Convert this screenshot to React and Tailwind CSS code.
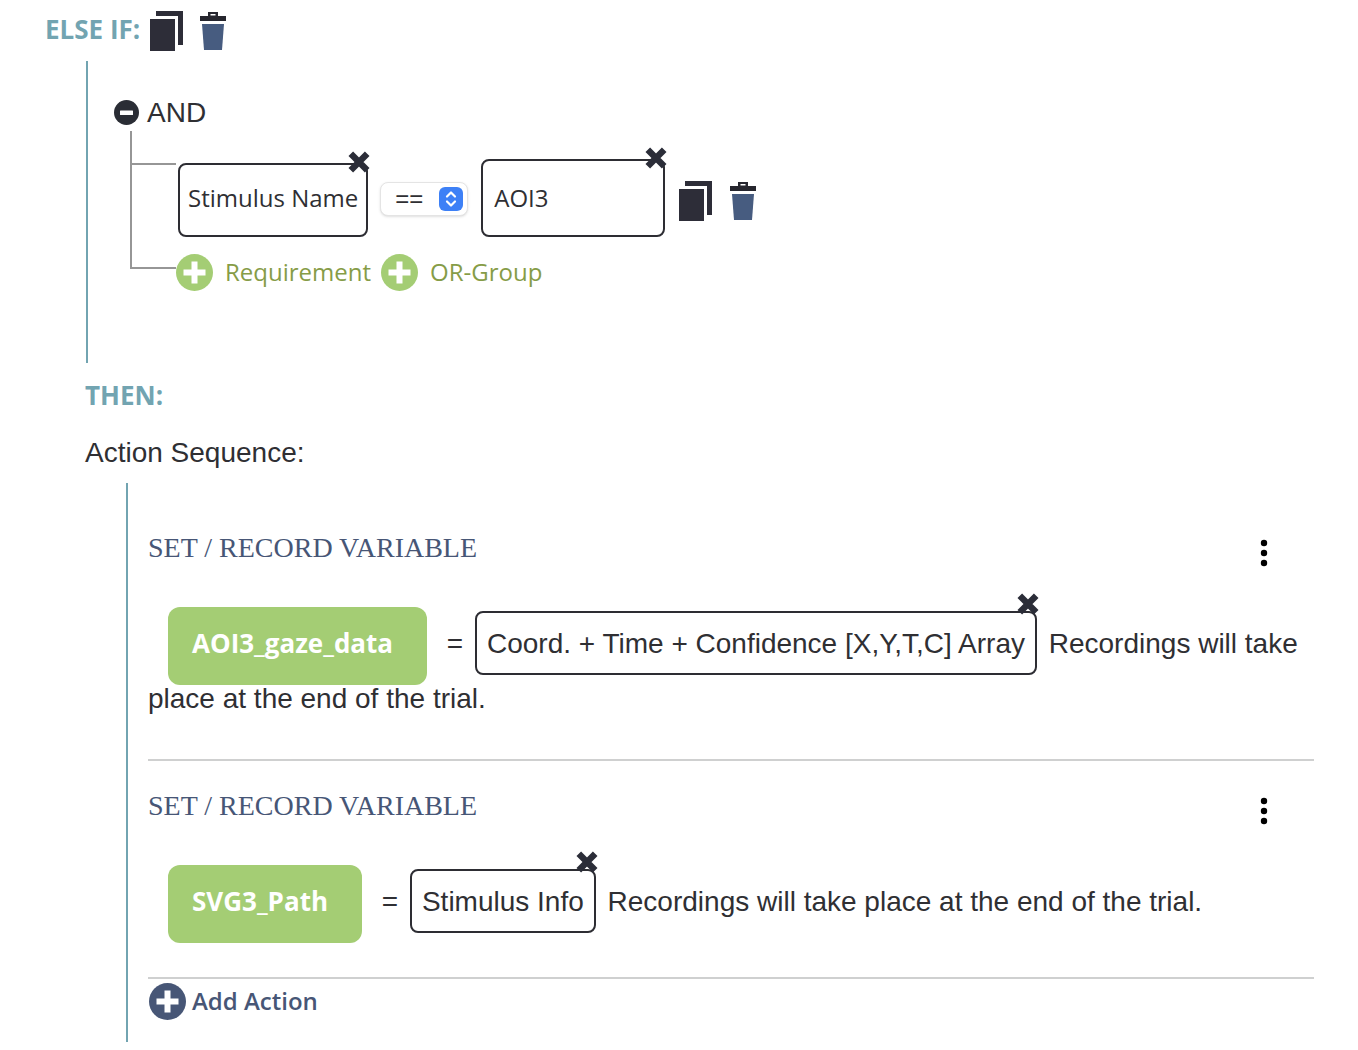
import { useState } from "react";

const ACTIONS = [
  { id: 1, variable: "AOI3_gaze_data", value: "Coord. + Time + Confidence [X,Y,T,C] Array" },
  { id: 2, variable: "SVG3_Path", value: "Stimulus Info" },
];

function CopyButton() {
  return (
    <button type="button" aria-label="Copy" className="shrink-0">
      <svg width="34" height="40" viewBox="0 0 34 40" fill="#2d2d38">
        <path d="M6 0h27v34h-5V5H6z" />
        <path d="M0 8h25v32H0z" />
      </svg>
    </button>
  );
}

function TrashButton() {
  return (
    <button type="button" aria-label="Delete" className="shrink-0">
      <svg width="26" height="38" viewBox="0 0 26 38">
        <path d="M8 4V0h10v4h8v5H0V4zM10.500 2v1.500h5V2z" fill="#26262e" fillRule="evenodd" />
        <path d="M2 12h22l-2 26H4z" fill="#475c80" />
      </svg>
    </button>
  );
}

function RemoveButton({ className }) {
  return (
    <button type="button" aria-label="Remove" className={`absolute ${className}`}>
      <svg width="22" height="22" viewBox="0 0 22 22" stroke="#2b2d38" strokeWidth="6.500">
        <path d="M2.800 2.800l16.400 16.400M19.200 2.800l-16.400 16.400" />
      </svg>
    </button>
  );
}

function PlusCircle({ className }) {
  return (
    <svg width="37" height="37" viewBox="0 0 37 37" className={`shrink-0 ${className}`}>
      <circle cx="18.500" cy="18.500" r="18.500" fill="currentColor" />
      <path d="M18.500 7.500v22M7.500 18.500h22" stroke="#fff" strokeWidth="6" />
    </svg>
  );
}

function OperatorSelect() {
  const [operator, setOperator] = useState("==");
  return (
    <div className="relative">
      <select
        aria-label="Operator"
        value={operator}
        onChange={(e) => setOperator(e.target.value)}
        className="block h-[34px] w-[88px] appearance-none rounded-lg border border-[#e4e4e4] bg-white pl-3.5 font-['Liberation_Sans',sans-serif] text-2xl leading-8 shadow-sm"
      >
        <option>==</option>
        <option>!=</option>
      </select>
      <svg
        width="24"
        height="24"
        viewBox="0 0 24 24"
        fill="none"
        className="pointer-events-none absolute top-[5px] right-[5px]"
      >
        <rect width="24" height="24" rx="6" fill="#3d80f6" />
        <path d="M8 9.500l4-4 4 4M8 14.500l4 4 4-4" stroke="#fff" strokeWidth="2.200" strokeLinecap="round" strokeLinejoin="round" />
      </svg>
    </div>
  );
}

function Requirement() {
  const [value, setValue] = useState("AOI3");
  return (
    <div className="flex items-end pl-0.5">
      <div className="relative h-[74px] rounded-lg border-2 border-[#2d2d33] px-2 pt-[13px]">
        <span className="text-2xl leading-10">Stimulus Name</span>
        <RemoveButton className="-top-3.5 -right-1" />
      </div>
      <div className="mb-[21px] ml-3">
        <OperatorSelect />
      </div>
      <div className="relative ml-[13px]">
        <input
          aria-label="Value"
          value={value}
          onChange={(e) => setValue(e.target.value)}
          className="block h-[78px] w-[184px] rounded-lg border-2 border-[#2d2d33] px-[11px] pb-0.5 text-2xl"
        />
        <RemoveButton className="-top-3 -right-0.5" />
      </div>
      <div className="mb-4 ml-3.5 flex items-center gap-[17px]">
        <CopyButton />
        <TrashButton />
      </div>
    </div>
  );
}

function ActionCard({ variable, value }) {
  return (
    <article className="border-b-2 border-[#cfd0d0] pt-[25px] pb-10">
      <div className="flex justify-between pr-[39px]">
        <h3 className="font-['Liberation_Serif',serif] text-[28px] leading-10 text-[#475676]">SET / RECORD VARIABLE</h3>
        <button type="button" aria-label="Action menu" className="mt-2.5 h-[30px] w-[22px]">
          <svg width="22" height="30" viewBox="0 0 22 30" fill="#000">
            <circle cx="11" cy="5" r="3.200" />
            <circle cx="11" cy="15" r="3.200" />
            <circle cx="11" cy="25" r="3.200" />
          </svg>
        </button>
      </div>
      <div className="mt-[39px] font-['Liberation_Sans',sans-serif] text-[28px] leading-10">
        <span className="mr-3 -mb-1.5 ml-5 inline-block h-[78px] rounded-xl bg-[#a4cd74] pt-4 pr-[34px] pl-6 font-['Open_Sans',sans-serif] text-[26px] font-bold text-white">
          {variable}
        </span>{" "}
        <span>=</span>{" "}
        <span className="relative mx-1 inline-block rounded-lg border-2 border-[#2d2d33] px-2.5 pt-[11px] pb-[9px]">
          {value}
          <RemoveButton className="-top-5 -right-1" />
        </span>{" "}
        <span>Recordings will take place at the end of the trial.</span>
      </div>
    </article>
  );
}

export default function App() {
  return (
    <main className="min-h-screen bg-white pt-[11px] pr-11 pb-2 pl-[45px] font-['Open_Sans',sans-serif] text-[#2f2f33]">
      <div className="flex h-10 items-start">
        <h2 className="text-[26px] leading-9 font-bold text-[#72a4b1]">ELSE IF:</h2>
        <div className="ml-2.5 flex items-center gap-4">
          <CopyButton />
          <TrashButton />
        </div>
      </div>

      <div className="pl-10">
        <section className="mt-2.5 ml-px border-l-2 border-[#72a4b1] pt-8 pb-[72px] pl-[26px]">
          <div className="flex h-[38px] items-center gap-2 font-['Liberation_Sans',sans-serif] text-[28px]">
            <button type="button" aria-label="Collapse group">
              <svg width="25" height="25" viewBox="0 0 25 25">
                <circle cx="12.500" cy="12.500" r="12.500" fill="#2a2d35" />
                <rect x="6" y="10.500" width="13" height="4.500" rx="0.500" fill="#fff" />
              </svg>
            </button>
            <span className="pt-0.5">AND</span>
          </div>
          <div className="ml-4 flex">
            <div className="mb-[22px] w-[46px] border-b-2 border-l-2 border-[#969696] pt-8">
              <div className="border-t-2 border-[#969696]" />
            </div>
            <div className="pt-7">
              <Requirement />
              <div className="mt-[17px] flex items-center gap-2.5 text-2xl leading-8 text-[#869c47]">
                <button type="button" className="flex items-center gap-3">
                  <PlusCircle className="text-[#a4cd74]" />
                  <span className="pb-0.5">Requirement</span>
                </button>
                <button type="button" className="flex items-center gap-3">
                  <PlusCircle className="text-[#a4cd74]" />
                  <span className="pb-0.5">OR-Group</span>
                </button>
              </div>
            </div>
          </div>
        </section>

        <h2 className="mt-3 text-[26px] leading-10 font-bold text-[#72a4b1]">THEN:</h2>
        <p className="mt-[18px] font-['Liberation_Sans',sans-serif] text-[28px] leading-10">Action Sequence:</p>

        <section className="mt-2.5 ml-[41px] border-l-2 border-[#72a4b1] pt-5 pb-[22px] pl-5">
          {ACTIONS.map((action) => (
            <ActionCard key={action.id} variable={action.variable} value={action.value} />
          ))}
          <button type="button" className="mt-1 ml-px flex items-center gap-1.5 text-2xl leading-8 font-semibold text-[#475676]">
            <PlusCircle className="text-[#475676]" />
            <span className="pb-0.5">Add Action</span>
          </button>
        </section>
      </div>
    </main>
  );
}
